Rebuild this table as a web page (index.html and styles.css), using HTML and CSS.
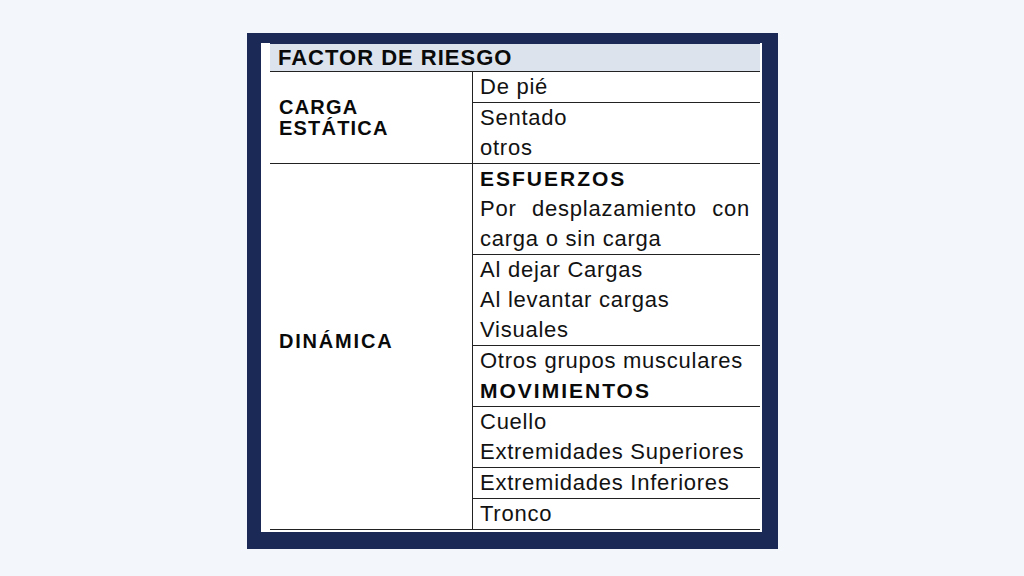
FILE: index.html
```html
<!DOCTYPE html>
<html lang="es">
<head>
<meta charset="utf-8">
<title>Factor de riesgo</title>
<link rel="stylesheet" href="styles.css">
</head>
<body>
<div class="page">
  <div class="frame">
    <div class="sheet">
      <div class="tbl">
        <div class="head">FACTOR DE RIESGO</div>
        <div class="group">
          <div class="cat">CARGA<br>ESTÁTICA</div>
          <div class="items">
            <div class="cell">De pié</div>
            <div class="cell">Sentado<br>otros</div>
          </div>
        </div>
        <div class="group">
          <div class="cat cat-dyn">DINÁMICA</div>
          <div class="items">
            <div class="cell"><span class="sub">ESFUERZOS</span><p class="just">Por desplazamiento con carga o sin carga</p></div>
            <div class="cell">Al dejar Cargas<br>Al levantar cargas<br>Visuales</div>
            <div class="cell">Otros grupos musculares<br><span class="sub">MOVIMIENTOS</span></div>
            <div class="cell">Cuello<br>Extremidades Superiores</div>
            <div class="cell">Extremidades Inferiores</div>
            <div class="cell">Tronco</div>
          </div>
        </div>
      </div>
    </div>
  </div>
</div>
</body>
</html>
```

FILE: styles.css
```css
* { box-sizing: border-box; }

html, body {
  margin: 0;
  padding: 0;
  background: #f3f7fb;
}

body {
  font-family: "Liberation Sans", Arial, sans-serif;
  color: #121212;
  width: 1024px;
  height: 576px;
  overflow: hidden;
}

.page {
  padding: 33px 0 0 247px;
}

.frame {
  width: 531px;
  background: #1b2956;
  padding: 10px 16px 17px 14px;
}

.sheet {
  background: #ffffff;
  padding: 0 2px 2px 9px;
}

.tbl {
  width: 490px;
}

.head {
  background: #dce3ed;
  font-weight: bold;
  font-size: 22px;
  letter-spacing: 1px;
  line-height: 28px;
  height: 29px;
  padding-left: 8px;
  color: #0a0a0a;
  border-top: 1px solid #1b2956;
  border-bottom: 1px solid #222;
}

.group {
  display: grid;
  grid-template-columns: 202px 1fr;
  border-bottom: 1px solid #222;
}

.cat {
  display: flex;
  align-items: center;
  padding-left: 9px;
  font-weight: bold;
  font-size: 20px;
  line-height: 21px;
  letter-spacing: 1.2px;
  color: #0a0a0a;
}

.cat-dyn {
  padding-bottom: 10px;
  letter-spacing: 1.8px;
}

.items {
  border-left: 1px solid #222;
}

.cell {
  font-size: 22px;
  line-height: 30px;
  letter-spacing: 0.75px;
  padding: 0 10px 0 7px;
  border-bottom: 1px solid #222;
}

.cell:last-child {
  border-bottom: none;
}

.sub {
  font-weight: bold;
  font-size: 21px;
  letter-spacing: 2px;
  color: #0a0a0a;
}

.just {
  margin: 0;
  text-align: justify;
}
```
